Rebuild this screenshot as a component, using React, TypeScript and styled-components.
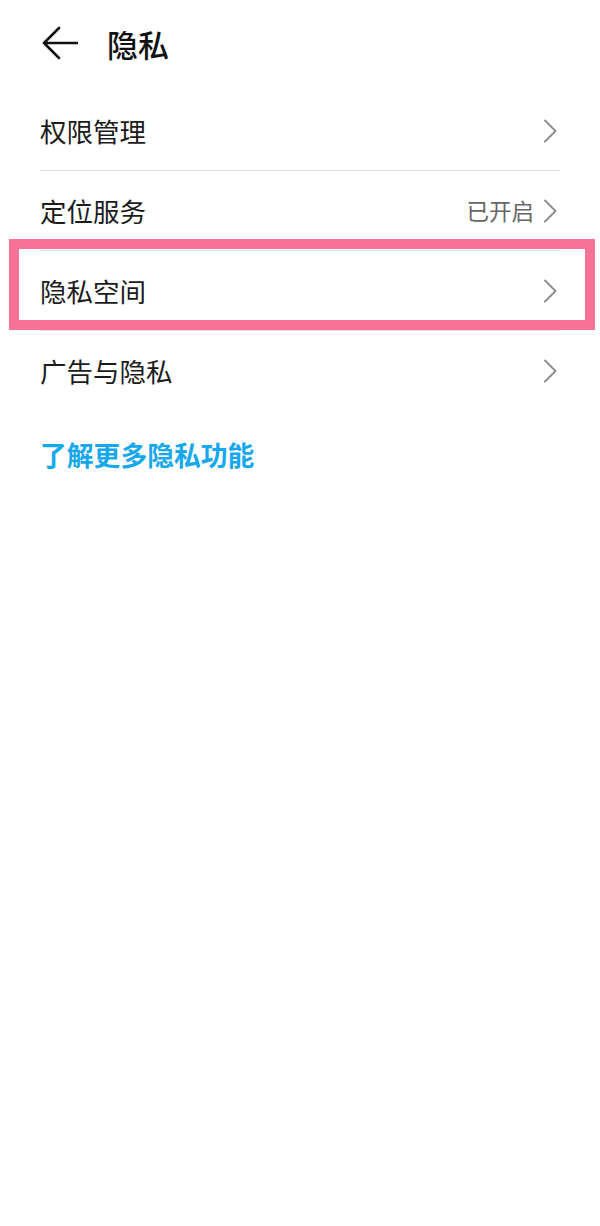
import React from "react";
import styled, { createGlobalStyle } from "styled-components";

const Global = createGlobalStyle`
  html, body { margin: 0; padding: 0; background: #ffffff; }
  body { font-family: "Noto Sans CJK SC", "Noto Sans", sans-serif; }
`;

const Page = styled.div`
  width: 600px;
  min-height: 1226px;
  background: #ffffff;
  display: flex;
  flex-direction: column;
`;

const Header = styled.div`
  height: 88px;
  display: flex;
  align-items: center;
  padding-left: 42px;
  gap: 29px;
  box-sizing: border-box;
  padding-bottom: 2px;
`;

const Title = styled.h1`
  margin: 0;
  font-size: 31px;
  font-weight: 500;
  color: #111;
  line-height: 1;
`;

const List = styled.div`
  display: flex;
  flex-direction: column;
  margin-top: 3px;
`;

const Row = styled.div<{ $divider?: boolean }>`
  position: relative;
  height: 80px;
  margin: 0 40px;
  display: flex;
  align-items: center;
  justify-content: space-between;
  box-sizing: border-box;
  border-bottom: ${(p) => (p.$divider ? "1px solid #e3e3e3" : "1px solid transparent")};
`;

const Label = styled.span`
  font-size: 26.5px;
  color: #1b1b1b;
  line-height: 1;
  margin-top: 1px;
`;

const Right = styled.div`
  display: flex;
  align-items: center;
  gap: 9px;
  margin-right: 3px;
`;

const Status = styled.span`
  font-size: 22.5px;
  color: #666;
  line-height: 1;
`;

const Highlight = styled.div`
  position: absolute;
  left: -31px;
  right: -35px;
  top: -12px;
  height: 91px;
  border: 10px solid #f87298;
  box-sizing: border-box;
  pointer-events: none;
`;

const Link = styled.a`
  margin: 31px 0 0 40px;
  font-size: 26.8px;
  font-weight: 700;
  color: #16a7ec;
  line-height: 1;
  text-decoration: none;
`;

const Chevron = () => (
  <svg width="14" height="24" viewBox="0 0 14 24">
    <path d="M2 1.5 L12.5 12 L2 22.5" fill="none" stroke="#8e8e8e" strokeWidth="2" strokeLinecap="round" strokeLinejoin="round" />
  </svg>
);

const BackArrow = () => (
  <svg width="36" height="34" viewBox="0 0 36 34">
    <path d="M17 2 L2 17 L17 32 M2 17 L35 17" fill="none" stroke="#111" strokeWidth="2.6" strokeLinecap="round" strokeLinejoin="round" />
  </svg>
);

export default function App() {
  return (
    <Page>
      <Global />
      <Header>
        <BackArrow />
        <Title>隐私</Title>
      </Header>
      <List>
        <Row $divider>
          <Label>权限管理</Label>
          <Right><Chevron /></Right>
        </Row>
        <Row $divider>
          <Label>定位服务</Label>
          <Right>
            <Status>已开启</Status>
            <Chevron />
          </Right>
        </Row>
        <Row $divider>
          <Label>隐私空间</Label>
          <Right><Chevron /></Right>
          <Highlight />
        </Row>
        <Row>
          <Label>广告与隐私</Label>
          <Right><Chevron /></Right>
        </Row>
      </List>
      <Link>了解更多隐私功能</Link>
    </Page>
  );
}
